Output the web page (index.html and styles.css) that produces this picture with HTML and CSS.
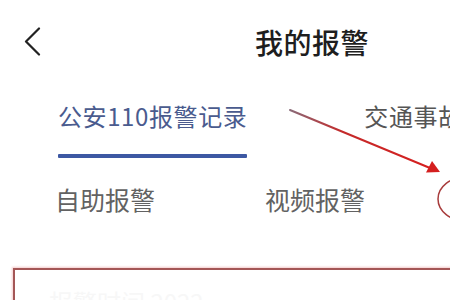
FILE: index.html
```html
<!DOCTYPE html>
<html lang="zh-CN">
<head>
<meta charset="utf-8">
<link rel="stylesheet" href="styles.css">
</head>
<body>
<div class="page">
  <header class="header">
    <svg class="back" width="20" height="30" viewBox="0 0 20 30"><path d="M16 1.5 L3 14.5 L16 27.5" fill="none" stroke="#222" stroke-width="2.2" stroke-linecap="round" stroke-linejoin="round"/></svg>
    <h1 class="title">我的报警</h1>
  </header>
  <nav class="tabs">
    <div class="tab active">
      <span class="tab-label">公安110报警记录</span>
      <span class="tab-bar"></span>
    </div>
    <div class="tab"><span class="tab-label">交通事故报警</span></div>
  </nav>
  <div class="subtabs">
    <span class="subtab">自助报警</span>
    <span class="subtab">视频报警</span>
  </div>
  <section class="card">
    <p class="card-text">报警时间 2022</p>
  </section>
  <svg class="annot" width="450" height="300" viewBox="0 0 450 300">
    <defs>
      <linearGradient id="g" x1="290" y1="110" x2="440" y2="172" gradientUnits="userSpaceOnUse">
        <stop offset="0" stop-color="#8a6a78"/>
        <stop offset="0.35" stop-color="#c42a2a"/>
        <stop offset="1" stop-color="#d81e1e"/>
      </linearGradient>
    </defs>
    <path d="M290 110 L430 168" stroke="url(#g)" stroke-width="2" fill="none" stroke-linecap="round"/>
    <path d="M440 172 L426 172.5 L432 161 Z" fill="#d41f1f"/>
    <ellipse cx="466" cy="199" rx="28" ry="22" fill="none" stroke="#a83c3c" stroke-width="1.5"/>
  </svg>
</div>
</body>
</html>
```
FILE: styles.css
```css
html, body {
  margin: 0;
  padding: 0;
  background: #fff;
}
body {
  width: 450px;
  height: 300px;
  overflow: hidden;
  font-family: "Noto Sans CJK SC", "Noto Sans", sans-serif;
}
.page {
  position: relative;
  width: 450px;
  height: 300px;
  overflow: hidden;
}
.header {
  display: flex;
  align-items: center;
  height: 84px;
  padding-left: 23px;
}
.back {
  display: block;
  flex: none;
}
.title {
  margin: 0 0 0 212px;
  font-size: 28px;
  line-height: 1;
  font-weight: 500;
  color: #1e1e1e;
  white-space: nowrap;
  letter-spacing: 0.5px;
}
.tabs {
  display: flex;
  gap: 117px;
  padding-left: 58px;
  padding-top: 19px;
  white-space: nowrap;
}
.tab {
  display: flex;
  flex-direction: column;
  align-items: stretch;
  flex: none;
}
.tab-label {
  font-size: 24px;
  line-height: 26px;
  color: #555;
  letter-spacing: 0.6px;
}
.tab.active .tab-label {
  color: #4a5b8e;
}
.tab-bar {
  display: block;
  height: 4px;
  margin-top: 25px;
  background: #3d58a3;
  border-radius: 1px;
}
.subtabs {
  display: flex;
  gap: 110px;
  padding-left: 55px;
  padding-top: 28px;
  white-space: nowrap;
}
.subtab {
  font-size: 25px;
  line-height: 27px;
  color: #626262;
}
.card {
  margin: 55px 0 0 13px;
  width: 470px;
  height: 80px;
  border: 2px solid #a45656;
  box-shadow: 0 0 2px 1px #f3caca;
  box-sizing: border-box;
  padding: 19px 0 0 34px;
}
.card-text {
  margin: 0;
  font-size: 24px;
  line-height: 26px;
  color: #f7f7f7;
}
.annot {
  position: absolute;
  left: 0;
  top: 0;
  pointer-events: none;
}
```
